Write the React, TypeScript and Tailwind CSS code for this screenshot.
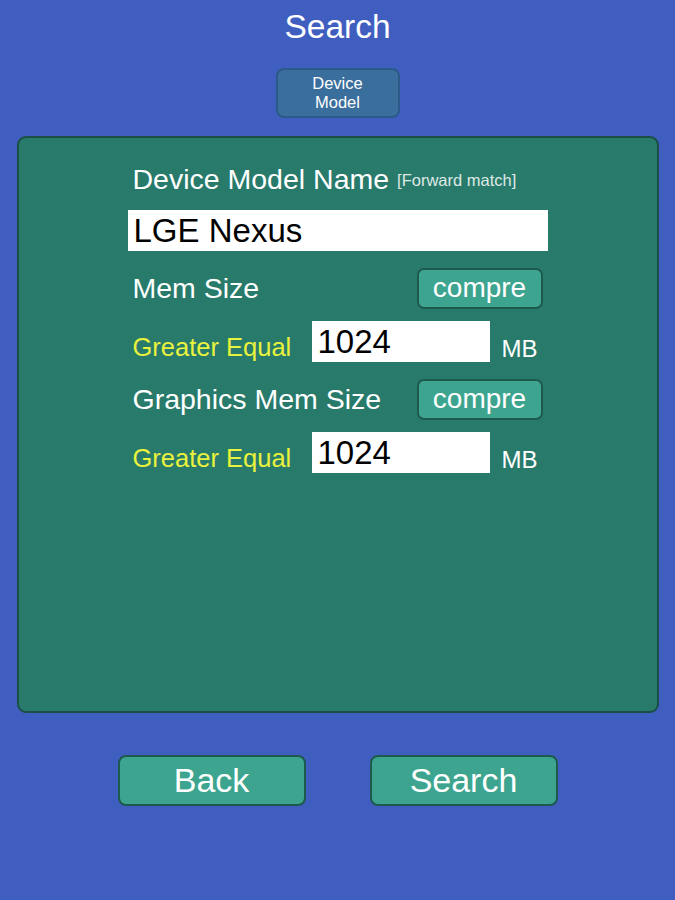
import React from 'react';

const Compre: React.FC = () => (
  <button className="w-[126px] h-[41px] rounded-[7px] bg-[#3da58f] border-2 border-[#1d5a4d] text-white text-[28px] leading-none pb-[1px]">
    compre
  </button>
);

const NumRow: React.FC<{ value: string }> = ({ value }) => (
  <div className="flex items-center h-[41px]">
    <span className="ml-[5px] mt-[12px] w-[179px] text-[25.5px] leading-none text-[#e9f23c]">Greater Equal</span>
    <div className="w-[178px] h-[41px] bg-white flex items-center px-[6px] pb-[1px] text-[33px] leading-none text-black">{value}</div>
    <span className="ml-[12px] mt-[14px] text-[24px] leading-none text-white">MB</span>
  </div>
);

const App: React.FC = () => {
  return (
    <div className="w-[675px] h-[900px] bg-[#3f5ec0] flex flex-col items-center font-['Liberation_Sans',Arial,sans-serif]">
      <h1 className="mt-[7px] h-[40px] leading-[40px] text-[33.5px] text-white">Search</h1>
      <button className="mt-[21px] w-[124px] h-[50px] rounded-[8px] bg-[#3a6e9c] border-2 border-[#2c5a88] text-white text-[16.5px] leading-[19px]">
        Device
        <br />
        Model
      </button>

      <div className="mt-[18px] w-[642px] h-[577px] rounded-[9px] bg-[#287a6b] border-2 border-[#1b4f45] pl-[109px] pt-[26px]">
        <div className="ml-[5px] h-[30px] flex items-end text-white">
          <span className="text-[28.5px] leading-[30px]">Device Model Name</span>
          <span className="ml-[8px] mb-[1px] text-[16.5px] text-[#dfe9e6]">[Forward match]</span>
        </div>
        <div className="mt-[16px] w-[420px] h-[41px] bg-white flex items-center px-[6px] pb-[1px] text-[33px] leading-none text-black">LGE Nexus</div>

        <div className="mt-[17px] w-[415px] h-[41px] flex items-center justify-between">
          <span className="ml-[5px] text-[28.5px] leading-none text-white">Mem Size</span>
          <Compre />
        </div>
        <div className="mt-[12px]">
          <NumRow value="1024" />
        </div>

        <div className="mt-[17px] w-[415px] h-[41px] flex items-center justify-between">
          <span className="ml-[5px] text-[28.5px] leading-none text-white">Graphics Mem Size</span>
          <Compre />
        </div>
        <div className="mt-[12px]">
          <NumRow value="1024" />
        </div>
      </div>

      <div className="mt-[42px] flex gap-[64px]">
        <button className="w-[188px] h-[51px] rounded-[8px] bg-[#3da58f] border-2 border-[#1d5a4d] text-white text-[34px] leading-none pb-[2px]">
          Back
        </button>
        <button className="w-[188px] h-[51px] rounded-[8px] bg-[#3da58f] border-2 border-[#1d5a4d] text-white text-[34px] leading-none pb-[2px]">
          Search
        </button>
      </div>
    </div>
  );
};

export default App;
